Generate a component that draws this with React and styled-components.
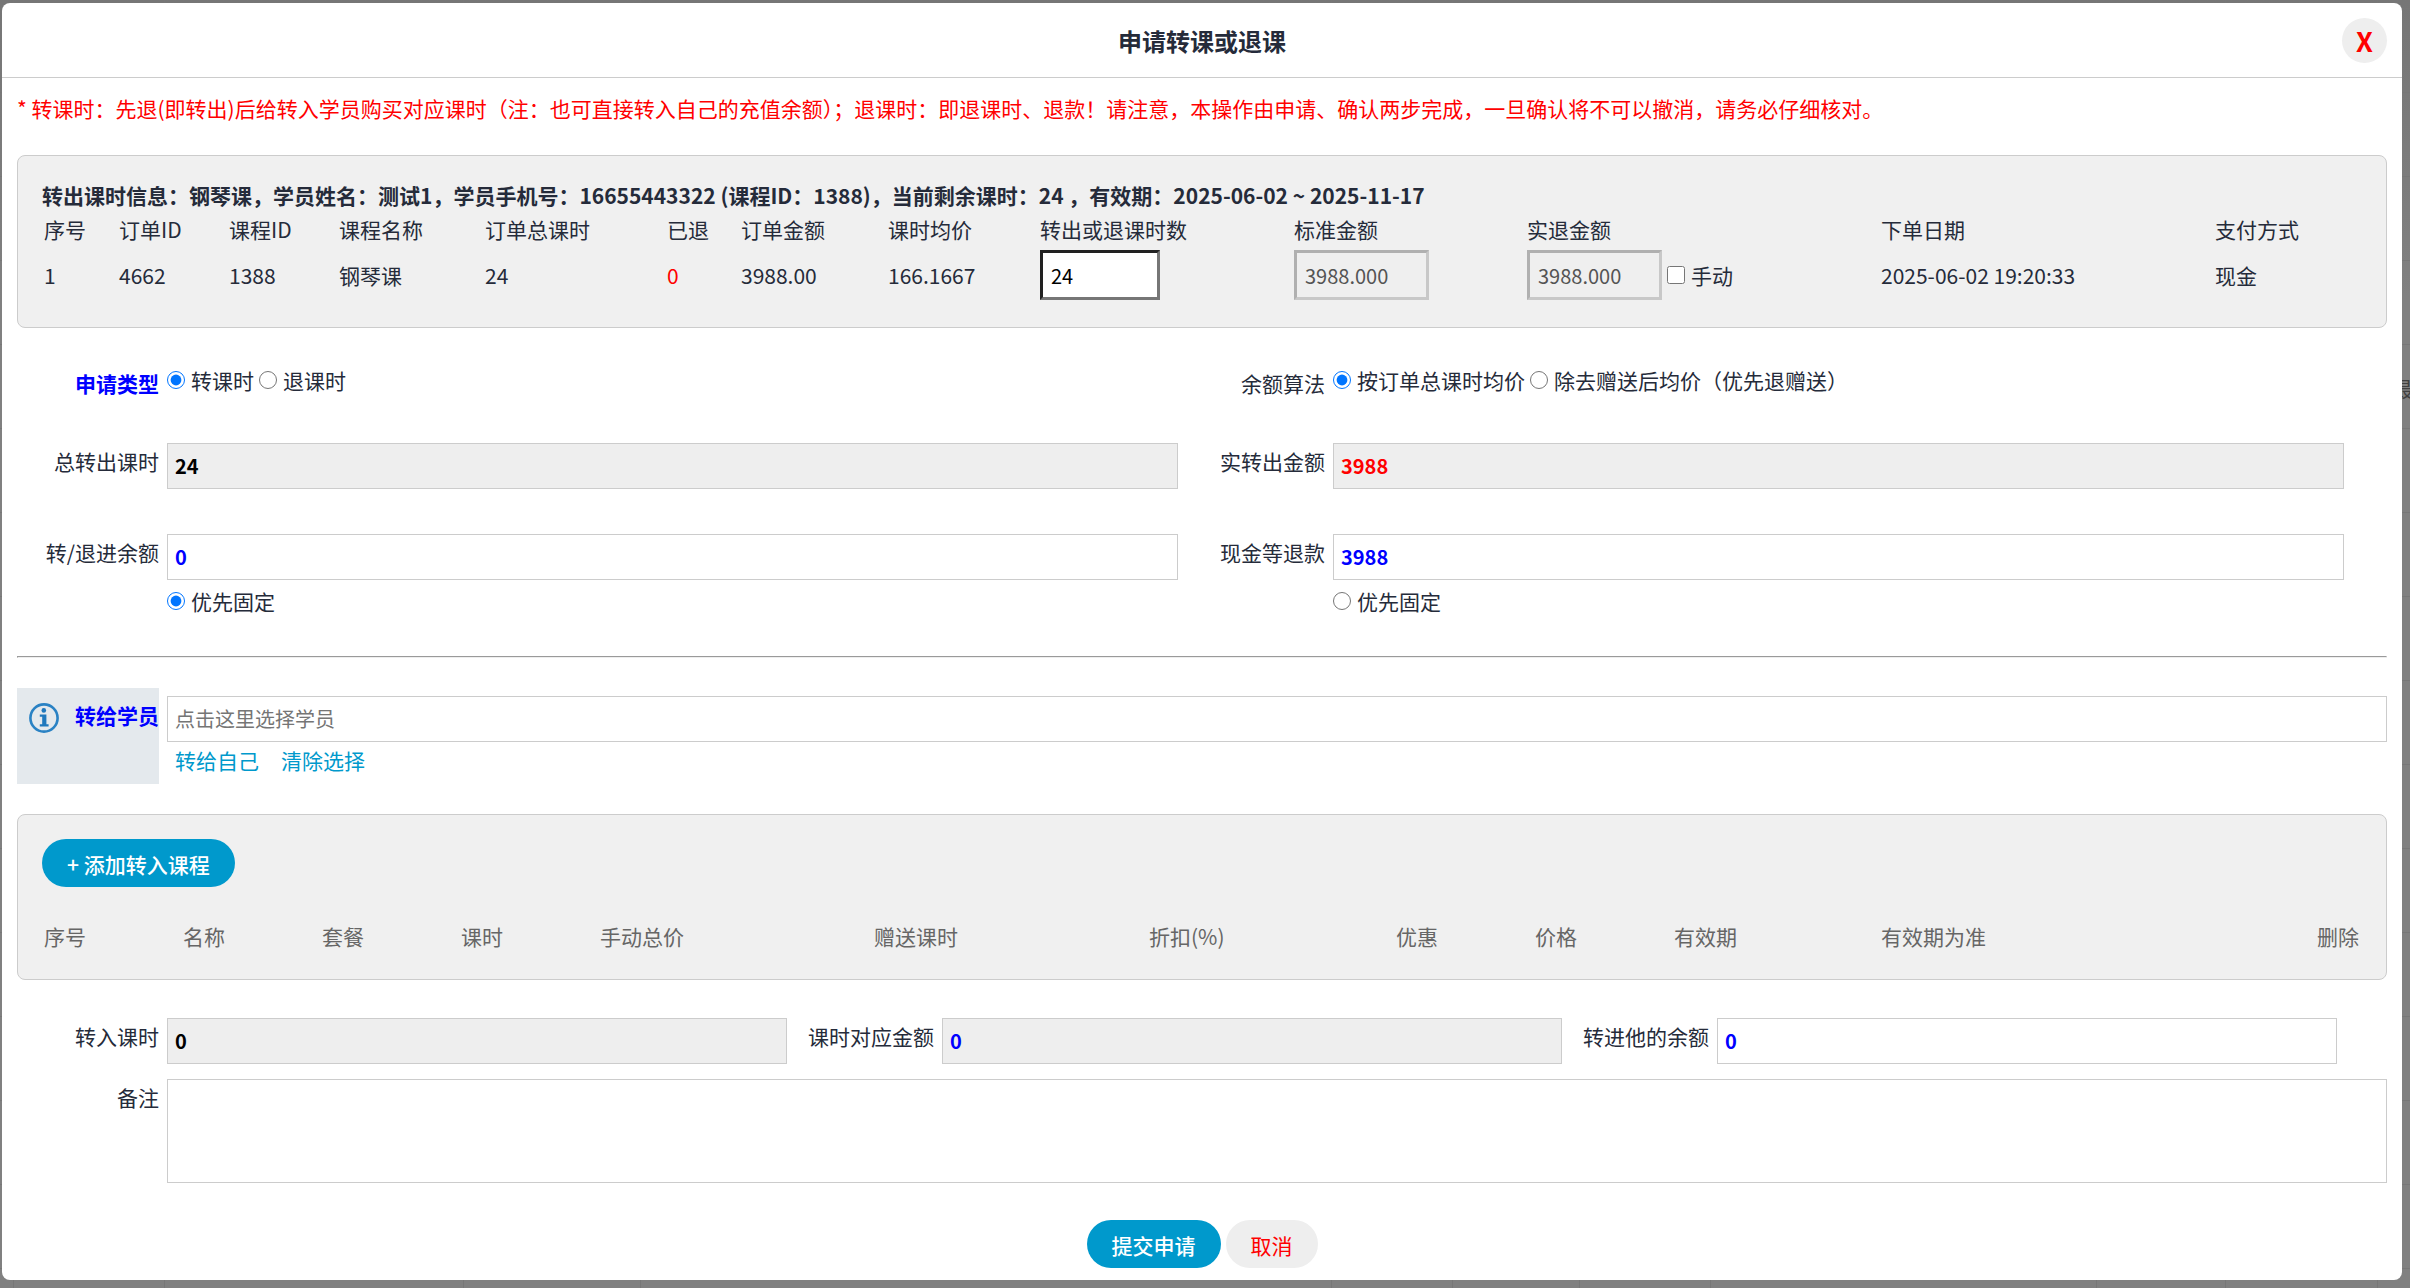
import React, { useState } from 'react'
import styled, { createGlobalStyle } from 'styled-components'

const orderColumns = [
  { title: '序号', width: 75 },
  { title: '订单ID', width: 110 },
  { title: '课程ID', width: 110 },
  { title: '课程名称', width: 146 },
  { title: '订单总课时', width: 182 },
  { title: '已退', width: 74 },
  { title: '订单金额', width: 147 },
  { title: '课时均价', width: 152 },
  { title: '转出或退课时数', width: 254 },
  { title: '标准金额', width: 233 },
  { title: '实退金额', width: 354 },
  { title: '下单日期', width: 334 },
  { title: '支付方式', width: 149 },
]

const courseColumns = [
  { title: '序号', width: 139 },
  { title: '名称', width: 139 },
  { title: '套餐', width: 139 },
  { title: '课时', width: 139 },
  { title: '手动总价', width: 274 },
  { title: '赠送课时', width: 275 },
  { title: '折扣(%)', width: 247 },
  { title: '优惠', width: 139 },
  { title: '价格', width: 139 },
  { title: '有效期', width: 207 },
  { title: '有效期为准', width: 436 },
  { title: '删除', width: 47 },
]

// column widths of the list behind the dialog
const listColumns = [14, 151, 299, 177, 691, 121, 127, 131, 386, 129, 152]

const TableHead = ({ columns }) => (
  <>
    <colgroup>
      {columns.map((col) => (
        <col key={col.title} width={col.width} />
      ))}
    </colgroup>
    <thead>
      <tr>
        {columns.map((col) => (
          <th key={col.title} scope='col'>
            {col.title}
          </th>
        ))}
      </tr>
    </thead>
  </>
)

const InfoIcon = () => (
  <svg width='30' height='30' viewBox='0 0 30 30' aria-hidden='true'>
    <circle cx='15' cy='15' r='13.6' fill='none' stroke='#2a82c4' strokeWidth='2.6' />
    <circle cx='14.8' cy='7.4' r='2.3' fill='#1f78bd' />
    <path d='M10.8 11.6h6.6v9.6h2.2v2.2h-8.8v-2.2h2.4v-7.4h-2.4z' fill='#1f78bd' />
  </svg>
)

const App = () => {
  const [type, setType] = useState('transfer')
  const [method, setMethod] = useState('average')
  const [fixed, setFixed] = useState('balance')

  return (
    <>
      <GlobalStyle />
      <Backdrop>
        <ListBehind aria-hidden='true'>
          {listColumns.map((width) => (
            <ListColumn key={width} $width={width} />
          ))}
          <ListText>最</ListText>
        </ListBehind>

        <Modal>
          <Header>
            <h1>申请转课或退课</h1>
            <CloseButton type='button'>X</CloseButton>
          </Header>

          <Content>
            <Notice>
              * 转课时：先退(即转出)后给转入学员购买对应课时（注：也可直接转入自己的充值余额）；退课时：即退课时、退款！请注意，本操作由申请、确认两步完成，一旦确认将不可以撤消，请务必仔细核对。
            </Notice>

            <OrderPanel>
              <h2>
                转出课时信息：钢琴课，学员姓名：测试1，学员手机号：16655443322 (课程ID：1388)，当前剩余课时：24 ，有效期：2025-06-02 ~ 2025-11-17
              </h2>
              <Table>
                <TableHead columns={orderColumns} />
                <tbody>
                  <tr>
                    <td>1</td>
                    <td>4662</td>
                    <td>1388</td>
                    <td>钢琴课</td>
                    <td>24</td>
                    <td className='refunded'>0</td>
                    <td>3988.00</td>
                    <td>166.1667</td>
                    <td>
                      <CellInput $width={120} aria-label='转出或退课时数' defaultValue='24' />
                    </td>
                    <td>
                      <CellInput $width={135} aria-label='标准金额' defaultValue='3988.000' disabled />
                    </td>
                    <td>
                      <Inline>
                        <CellInput $width={135} aria-label='实退金额' defaultValue='3988.000' disabled />
                        <Choice>
                          <input type='checkbox' />
                          <span>手动</span>
                        </Choice>
                      </Inline>
                    </td>
                    <td>2025-06-02 19:20:33</td>
                    <td>现金</td>
                  </tr>
                </tbody>
              </Table>
            </OrderPanel>

            <TwoColumns>
              <Field>
                <Label as='span' $strong>
                  申请类型
                </Label>
                <Inline role='radiogroup' aria-label='申请类型'>
                  <Choice>
                    <input
                      type='radio'
                      name='type'
                      checked={type === 'transfer'}
                      onChange={() => setType('transfer')}
                    />
                    <span>转课时</span>
                  </Choice>
                  <Choice>
                    <input
                      type='radio'
                      name='type'
                      checked={type === 'refund'}
                      onChange={() => setType('refund')}
                    />
                    <span>退课时</span>
                  </Choice>
                </Inline>
              </Field>
              <Field>
                <Label as='span'>余额算法</Label>
                <Inline role='radiogroup' aria-label='余额算法'>
                  <Choice>
                    <input
                      type='radio'
                      name='method'
                      checked={method === 'average'}
                      onChange={() => setMethod('average')}
                    />
                    <span>按订单总课时均价</span>
                  </Choice>
                  <Choice>
                    <input
                      type='radio'
                      name='method'
                      checked={method === 'gift'}
                      onChange={() => setMethod('gift')}
                    />
                    <span>除去赠送后均价（优先退赠送）</span>
                  </Choice>
                </Inline>
              </Field>

              <Field>
                <Label htmlFor='totalHours'>总转出课时</Label>
                <TextInput id='totalHours' defaultValue='24' readOnly />
              </Field>
              <Field>
                <Label htmlFor='totalAmount'>实转出金额</Label>
                <TextInput id='totalAmount' $color='#f00' defaultValue='3988' readOnly />
              </Field>

              <Field>
                <Label htmlFor='toBalance'>转/退进余额</Label>
                <div>
                  <TextInput id='toBalance' $color='#00f' defaultValue='0' />
                  <Choice>
                    <input
                      type='radio'
                      name='fixed'
                      checked={fixed === 'balance'}
                      onChange={() => setFixed('balance')}
                    />
                    <span>优先固定</span>
                  </Choice>
                </div>
              </Field>
              <Field>
                <Label htmlFor='toCash'>现金等退款</Label>
                <div>
                  <TextInput id='toCash' $color='#00f' defaultValue='3988' />
                  <Choice>
                    <input
                      type='radio'
                      name='fixed'
                      checked={fixed === 'cash'}
                      onChange={() => setFixed('cash')}
                    />
                    <span>优先固定</span>
                  </Choice>
                </div>
              </Field>
            </TwoColumns>

            <Divider />

            <StudentRow>
              <StudentLabel htmlFor='student'>
                <InfoIcon />
                转给学员
              </StudentLabel>
              <div>
                <TextInput id='student' placeholder='点击这里选择学员' />
                <Links>
                  <a href='#self'>转给自己</a>
                  <a href='#clear'>清除选择</a>
                </Links>
              </div>
            </StudentRow>

            <CoursePanel>
              <PillButton type='button'>+ 添加转入课程</PillButton>
              <Table $muted>
                <TableHead columns={courseColumns} />
              </Table>
            </CoursePanel>

            <ThreeColumns>
              <Field>
                <Label htmlFor='inHours'>转入课时</Label>
                <TextInput id='inHours' defaultValue='0' readOnly />
              </Field>
              <Field>
                <Label htmlFor='inAmount'>课时对应金额</Label>
                <TextInput id='inAmount' $color='#00f' defaultValue='0' readOnly />
              </Field>
              <Field>
                <Label htmlFor='inBalance'>转进他的余额</Label>
                <TextInput id='inBalance' $color='#00f' defaultValue='0' />
              </Field>
            </ThreeColumns>

            <RemarkRow>
              <Label htmlFor='remark'>备注</Label>
              <TextArea id='remark' />
            </RemarkRow>

            <Actions>
              <PillButton type='button'>提交申请</PillButton>
              <PillButton type='button' $plain>
                取消
              </PillButton>
            </Actions>
          </Content>
        </Modal>
      </Backdrop>
    </>
  )
}

export default App

const GlobalStyle = createGlobalStyle`
  * {
    box-sizing: border-box;
  }

  body {
    margin: 0;
    background: #808080;
    color: #252b3a;
    font-family: 'Noto Sans CJK SC', sans-serif;
    font-size: 21px;
    line-height: 30px;
  }

  button,
  input,
  textarea {
    font-family: inherit;
  }
`

const Backdrop = styled.div`
  position: relative;
  min-height: 100vh;
  padding: 3px 8px 8px 2px;
  background: linear-gradient(#767676, #808080 300px);
`

/* the page under the dialog, only its edges show */
const ListBehind = styled.div`
  position: absolute;
  inset: 0;
  display: flex;
  overflow: hidden;
  background: repeating-linear-gradient(transparent 0 8px, #777 8px 9px, transparent 9px 84px);
`

const ListColumn = styled.div`
  flex: 0 1 ${({ $width }) => $width}px;
  border-right: 1px solid #777;
`

const ListText = styled.span`
  position: absolute;
  top: 373px;
  right: -3px;
  color: #404040;
`

const Modal = styled.div`
  position: relative;
  background: #fff;
  border-radius: 8px;
`

const Header = styled.header`
  display: grid;
  grid-template-columns: 45px 1fr 45px;
  align-items: center;
  height: 75px;
  padding: 0 15px;
  border-bottom: 1px solid #ccc;

  h1 {
    grid-column: 2;
    margin: 0;
    padding-top: 2px;
    font-size: 24px;
    font-weight: 700;
    text-align: center;
  }
`

const CloseButton = styled.button`
  width: 45px;
  height: 45px;
  padding: 0;
  border: 0;
  border-radius: 50%;
  background: #eee;
  color: #f00;
  font-size: 27px;
  font-weight: 700;
  line-height: 45px;
`

const Content = styled.div`
  padding: 15px 15px 12px;
`

const Notice = styled.p`
  margin: 0 0 32px;
  color: #f00;
`

const Panel = styled.section`
  border: 1px solid #ccc;
  border-radius: 8px;
  background: #f0f0f0;
`

const OrderPanel = styled(Panel)`
  padding: 24px 24px 25px;

  h2 {
    margin: 0;
    font-size: 21px;
    font-weight: 700;
  }
`

const CoursePanel = styled(Panel)`
  margin-top: 30px;
  padding: 24px;

  table {
    margin-top: 30px;
  }
`

const Table = styled.table`
  width: 100%;
  table-layout: fixed;
  border-collapse: collapse;

  th,
  td {
    padding: 0 2px;
    color: ${({ $muted }) => ($muted ? '#666' : 'inherit')};
    font-weight: 400;
    text-align: left;
    white-space: nowrap;
  }

  th {
    height: 38px;
  }

  td {
    height: 54px;
  }

  .refunded {
    color: #f00;
  }
`

const CellInput = styled.input`
  width: ${({ $width }) => $width}px;
  height: 50px;
  padding: 0 8px;
  border: 3px inset #767676;
  background: #fff;
  color: #000;
  font-size: 20px;
  vertical-align: middle;

  &:disabled {
    border-style: solid;
    border-color: #b0b0b0 #c8c8c8 #c8c8c8 #b0b0b0;
    background: #efefef;
    color: #545454;
  }
`

const Inline = styled.div`
  display: flex;
  align-items: center;
`

const Choice = styled.label`
  display: flex;
  gap: 6px;

  input {
    width: 18px;
    height: 18px;
    margin: 6px 0 0;
  }

  ${Inline} > & + & {
    margin-left: 5px;
  }

  ${CellInput} + & {
    margin-left: 5px;
  }
`

const TwoColumns = styled.div`
  display: grid;
  grid-template-columns: 1fr 1fr;
  row-gap: 45px;
  margin-top: 37px;
  padding-right: 38px;
`

const ThreeColumns = styled.div`
  display: grid;
  grid-template-columns: repeat(3, 1fr);
  margin-top: 38px;
  padding-right: 45px;
`

const Field = styled.div`
  display: grid;
  grid-template-columns: 142px 1fr;
  column-gap: 8px;
  align-items: start;
  padding-right: 5px;
`

const Label = styled.label`
  padding-top: 3px;
  color: ${({ $strong }) => ($strong ? '#00f' : 'inherit')};
  font-weight: ${({ $strong }) => ($strong ? 700 : 400)};
  text-align: right;
  white-space: nowrap;
`

const TextInput = styled.input`
  display: block;
  width: 100%;
  height: 46px;
  padding: 0 7px 1px;
  border: 1px solid #ccc;
  outline: 0;
  background: ${({ readOnly }) => (readOnly ? '#eee' : '#fff')};
  color: ${({ $color }) => $color || '#000'};
  font-size: 20px;
  font-weight: 700;

  &::placeholder {
    color: #757575;
    font-weight: 400;
  }

  & + label {
    margin-top: 6px;
  }
`

const TextArea = styled.textarea`
  display: block;
  width: 100%;
  height: 104px;
  padding: 8px;
  border: 1px solid #ccc;
  outline: 0;
  font-size: 20px;
  resize: none;
`

const Divider = styled.hr`
  margin: 40px 0 30px;
  border: 1px solid #eee;
  border-top-color: #9a9a9a;
  border-left-color: #9a9a9a;
`

const StudentRow = styled.div`
  display: grid;
  grid-template-columns: 142px 1fr;
  column-gap: 8px;

  > div {
    padding-top: 8px;
  }
`

const StudentLabel = styled.label`
  display: flex;
  align-items: flex-start;
  justify-content: space-between;
  height: 96px;
  padding: 12px 0 0 12px;
  background: #e4e9ed;
  color: #00f;
  font-weight: 700;

  svg {
    margin-top: 3px;
  }
`

const Links = styled.div`
  display: flex;
  gap: 22px;
  padding: 3px 8px 0;

  a {
    color: #09c;
    text-decoration: none;
  }
`

const PillButton = styled.button`
  display: block;
  height: 48px;
  padding: 2px 25px 0;
  border: 0;
  border-radius: 24px;
  background: ${({ $plain }) => ($plain ? '#eee' : '#09c')};
  color: ${({ $plain }) => ($plain ? '#f00' : '#fff')};
  font-size: 21px;
  font-weight: ${({ $plain }) => ($plain ? 400 : 500)};
`

const RemarkRow = styled.div`
  display: grid;
  grid-template-columns: 142px 1fr;
  column-gap: 8px;
  margin-top: 15px;
`

const Actions = styled.div`
  display: flex;
  justify-content: center;
  gap: 5px;
  margin-top: 37px;
`
